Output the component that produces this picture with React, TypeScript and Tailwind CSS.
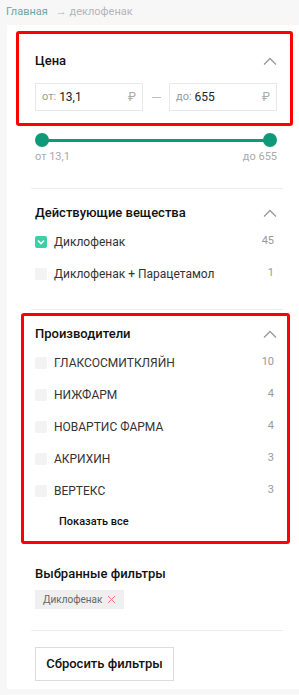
import React from "react";

function Chevron() {
  return (
    <svg width="14" height="8" viewBox="0 0 14 8" fill="none">
      <polyline points="1,7.5 7,1.5 13,7.5" stroke="#9a9a9a" strokeWidth="1.3" />
    </svg>
  );
}

function Check({ checked }: { checked?: boolean }) {
  if (checked) {
    return (
      <span className="w-[12px] h-[12px] rounded-[2px] bg-[#3dd0a6] flex items-center justify-center shrink-0">
        <svg width="8" height="6" viewBox="0 0 8 6" fill="none">
          <polyline points="1,1.5 4,4.5 7,1.5" stroke="#fff" strokeWidth="1.6" />
        </svg>
      </span>
    );
  }
  return <span className="w-[12px] h-[12px] rounded-[2px] bg-[#f3f3f3] shrink-0" />;
}

function Row({ label, count, checked }: { label: string; count: number; checked?: boolean }) {
  return (
    <div className="flex items-center h-[32px]">
      <Check checked={checked} />
      <span className="ml-[7px] text-[12px] text-[#333] flex-1">{label}</span>
      <span className="text-[11px] text-[#999] w-[16px] text-right mr-[3px]">{count}</span>
    </div>
  );
}

export default function App() {
  const substances = [
    { label: "Диклофенак", count: 45, checked: true },
    { label: "Диклофенак + Парацетамол", count: 1 },
  ];
  const makers = [
    { label: "ГЛАКСОСМИТКЛЯЙН", count: 10 },
    { label: "НИЖФАРМ", count: 4 },
    { label: "НОВАРТИС ФАРМА", count: 4 },
    { label: "АКРИХИН", count: 3 },
    { label: "ВЕРТЕКС", count: 3 },
  ];

  return (
    <div className="w-[299px] h-[695px] bg-[#f7f7f7] overflow-hidden" style={{ fontFamily: "Roboto, 'Noto Sans', sans-serif" }}>
      {/* breadcrumb */}
      <div className="h-[25px] pl-[6px] flex items-center text-[11px]">
        <span className="text-[#6ea6a8]">Главная</span>
        <span className="ml-[8px] text-[#b5b5b5]">→ деклофенак</span>
      </div>

      <div className="ml-[7px] bg-white h-[664px] pl-[24px] pr-[16px] pt-[6px]">
        {/* price */}
        <div className="-ml-[15px] -mr-[10px] border-[3px] border-[#ff0000] rounded-[3px] pl-[16px] pr-[13px] pt-[16px] pb-[12px]">
          <div className="flex items-center justify-between h-[22px]">
            <span className="text-[13px] font-medium text-[#111]">Цена</span>
            <Chevron />
          </div>
          <div className="flex items-center mt-[11px]">
            <div className="w-[108px] h-[28px] border border-[#e8e8e8] flex items-center px-[6px]">
              <span className="text-[11px] text-[#999]">от:</span>
              <span className="ml-[3px] text-[12px] text-[#222] flex-1">13,1</span>
              <span className="text-[12px] text-[#aaa]">₽</span>
            </div>
            <div className="flex-1 flex justify-center">
              <span className="w-[9px] h-px bg-[#bbb]" />
            </div>
            <div className="w-[108px] h-[28px] border border-[#e8e8e8] flex items-center px-[6px]">
              <span className="text-[11px] text-[#999]">до:</span>
              <span className="ml-[3px] text-[12px] text-[#222] flex-1">655</span>
              <span className="text-[12px] text-[#aaa]">₽</span>
            </div>
          </div>
        </div>

        {/* slider */}
        <div className="px-[4px] pr-[6px]">
          <div className="relative h-[16px] mt-[6px] flex items-center">
            <div className="mx-[7px] flex-1 h-[3px] bg-[#0e9a78]" />
            <span className="absolute left-0 top-[1px] w-[14px] h-[14px] rounded-full bg-[#0e9a78]" />
            <span className="absolute right-0 top-[1px] w-[14px] h-[14px] rounded-full bg-[#0e9a78]" />
          </div>
          <div className="flex justify-between text-[11px] text-[#aaa] mt-[1px]">
            <span>от 13,1</span>
            <span>до 655</span>
          </div>
        </div>

        <div className="h-px bg-[#ececec] mt-[22px]" />

        {/* substances */}
        <div className="pl-[4px] pr-[6px] pt-[13px] pb-[19px]">
          <div className="flex items-center justify-between h-[22px]">
            <span className="text-[13px] font-medium text-[#111]">Действующие вещества</span>
            <Chevron />
          </div>
          <div className="mt-[2px]">
            {substances.map((s) => (
              <Row key={s.label} {...s} />
            ))}
          </div>
        </div>

        <div className="h-px bg-[#ececec]" />

        {/* makers */}
        <div className="-ml-[10px] -mr-[7px] mt-[3px] border-[3px] border-[#ff0000] rounded-[3px] pl-[11px] pr-[10px] pt-[7px] pb-[11px]">
          <div className="flex items-center justify-between h-[22px]">
            <span className="text-[13px] font-medium text-[#111]">Производители</span>
            <Chevron />
          </div>
          <div className="mt-[2px]">
            {makers.map((m) => (
              <Row key={m.label} {...m} />
            ))}
          </div>
          <div className="pl-[24px] mt-[7px] text-[11px] font-medium text-[#111]">Показать все</div>
        </div>

        {/* selected */}
        <div className="pl-[4px] pt-[21px]">
          <div className="text-[13px] font-medium text-[#111] h-[18px] flex items-center">Выбранные фильтры</div>
          <div className="mt-[7px] inline-flex items-center h-[19px] bg-[#efefef] px-[8px] text-[10px] text-[#666]">
            Диклофенак
            <svg className="ml-[5px]" width="9" height="9" viewBox="0 0 9 9" fill="none">
              <path d="M1 1L8 8M8 1L1 8" stroke="#ee7b6f" strokeWidth="1" />
            </svg>
          </div>
        </div>

        <div className="h-px bg-[#ececec] mt-[20px]" />

        <div className="pl-[4px] pt-[16px]">
          <button className="w-[139px] h-[34px] border border-[#dcdcdc] text-[13px] font-medium text-[#111]">
            Сбросить фильтры
          </button>
        </div>
      </div>
    </div>
  );
}
